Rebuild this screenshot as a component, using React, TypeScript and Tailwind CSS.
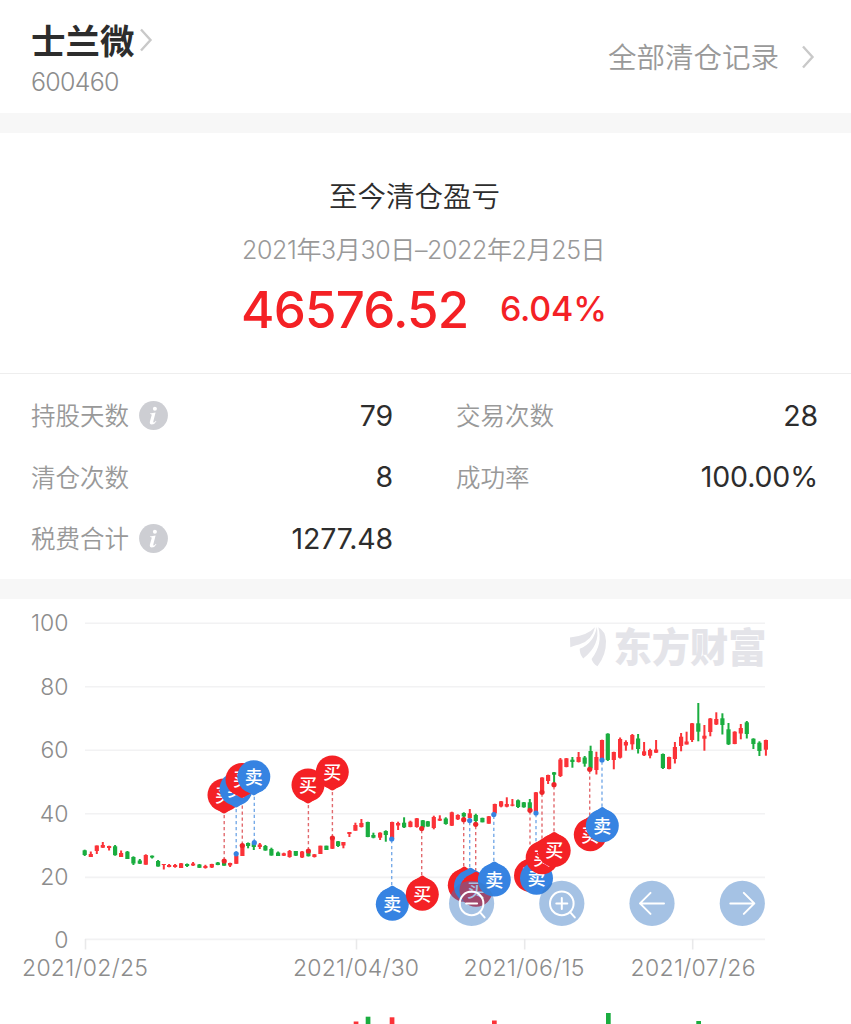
import React from "react";

type Candle = [x: number, color: "r" | "g", high: number, low: number, bodyTop: number, bodyBottom: number];

const RED = "#fb3238";
const GREEN = "#1aad3f";

const candles: Candle[] = [
  [84.6, "g", 849.7, 856, 850.3, 855],
  [90.7, "r", 851.5, 857, 854, 857],
  [96.7, "r", 845.5, 854, 845.5, 851],
  [102.7, "r", 842, 848, 845, 847.7],
  [109, "r", 845.7, 850.5, 846, 848],
  [115, "g", 845, 855.7, 846.3, 855.2],
  [121, "r", 850.5, 857, 853, 857],
  [127.3, "g", 851, 859, 851.7, 859],
  [133.3, "g", 856.3, 865, 857, 863.5],
  [139.7, "g", 859, 864, 860.5, 863.7],
  [145.7, "r", 854.3, 864.7, 855, 864.7],
  [152, "g", 855.5, 858.5, 855.7, 857.5],
  [158, "g", 860, 866.7, 861, 866.5],
  [163.7, "r", 864, 869.5, 864, 865],
  [169, "r", 864, 867.3, 865, 867],
  [175, "r", 864, 867.7, 865, 867],
  [181, "r", 863, 868, 863.3, 868],
  [187, "g", 863.5, 867, 864, 866],
  [193, "r", 862, 866, 863.5, 865.5],
  [199.3, "g", 864, 868, 864.5, 867.8],
  [205.3, "r", 864.8, 868.6, 866, 868],
  [211.7, "r", 863.8, 868, 864, 867.5],
  [217.7, "g", 862, 865.2, 862.5, 865],
  [224, "g", 862.5, 865.7, 862.5, 865.7],
  [230, "r", 862.7, 867, 863, 865.5],
  [236.2, "r", 854.7, 863.8, 855.7, 863.8],
  [242.3, "r", 845.5, 856, 845.5, 856],
  [248, "g", 842.5, 848.3, 843, 846],
  [253.7, "g", 843, 850, 843.5, 847],
  [259.7, "r", 843, 849, 844.5, 847],
  [265.3, "g", 845, 850.7, 846, 850.5],
  [271.3, "g", 847.7, 855.7, 849, 855.5],
  [278, "g", 851.5, 856, 852.5, 856],
  [283.7, "r", 852.7, 856, 853.3, 855.7],
  [289.5, "r", 850, 857.7, 851, 857],
  [295.7, "g", 851, 856, 851, 855.7],
  [302, "r", 851, 858, 851.5, 857.5],
  [308.3, "g", 851.5, 856.5, 852, 856.2],
  [314.3, "r", 854, 857.5, 854.3, 857],
  [320.3, "r", 845.7, 854, 845.7, 854],
  [326.3, "g", 845.7, 850, 845.7, 850],
  [332.3, "r", 838.5, 849, 839.5, 848.7],
  [338, "g", 841, 847, 841.3, 846],
  [343.3, "r", 842, 848.3, 842, 845.5],
  [349.3, "r", 832, 837, 832, 834],
  [355.3, "r", 822.7, 830.7, 825, 830.7],
  [361.3, "r", 819, 827.5, 823, 827],
  [367.7, "g", 821.7, 837.2, 822, 837],
  [373.3, "g", 832.7, 838.3, 835, 837.7],
  [380, "r", 832.3, 840, 832.7, 837.7],
  [385.7, "g", 830.3, 841.7, 831, 835],
  [392, "r", 821.7, 839, 822, 839],
  [398, "r", 821.7, 830, 823, 825.5],
  [404, "g", 817.3, 828, 822.7, 827.3],
  [410.3, "r", 820.7, 827.3, 821.7, 827],
  [416.7, "r", 818, 827.7, 818.3, 827],
  [422.7, "g", 820, 827.7, 820.3, 827.5],
  [427.7, "g", 821, 826.7, 821.3, 826.5],
  [433.7, "r", 815.7, 829.3, 817, 828],
  [439.7, "r", 815.3, 821, 818.7, 820.7],
  [445.7, "g", 817.3, 824.7, 818.5, 824],
  [451.7, "r", 811.7, 826, 812.3, 825.7],
  [457.7, "r", 814.3, 820, 815, 819.3],
  [463.7, "g", 812.3, 818, 813, 816.5],
  [469.7, "r", 809, 818.3, 813.3, 818],
  [475.7, "g", 813.7, 822, 815, 821],
  [482.3, "g", 817.7, 822.3, 817.9, 822.3],
  [488.7, "r", 816, 823.7, 816.3, 823.7],
  [494.7, "r", 803.7, 814, 804, 813.5],
  [501, "r", 801, 807.3, 801.3, 806.5],
  [506.7, "r", 797.3, 807.3, 804, 806.7],
  [512.3, "r", 799, 806.3, 804.5, 805.7],
  [518, "g", 799.5, 808, 800.3, 807],
  [523.7, "g", 802, 807.7, 802.3, 807.3],
  [529.7, "g", 799, 809.3, 802.3, 809.3],
  [535.8, "r", 792, 813, 792.3, 812],
  [542, "r", 777.3, 792.3, 777.5, 792],
  [548, "r", 774.7, 784, 775, 781],
  [554, "g", 772, 784, 772.3, 774.7],
  [560.3, "r", 758, 777, 759.5, 776],
  [566.3, "r", 758, 767.3, 758.3, 767],
  [572.3, "g", 757, 767.7, 759.7, 762],
  [578.5, "r", 752, 762.5, 757, 762],
  [584.6, "g", 756, 766.7, 757.5, 763.7],
  [590.5, "g", 745.7, 770.7, 751, 768.5],
  [596.3, "r", 751.7, 774.5, 757, 770],
  [601.9, "r", 739.7, 761, 740, 760],
  [607.7, "g", 733.3, 761, 733.7, 760],
  [613.7, "r", 751.7, 769.3, 752, 760],
  [620, "r", 737.5, 758.5, 739, 757.7],
  [625.8, "r", 740.3, 750.7, 742, 745.5],
  [632.2, "r", 734, 749.7, 735, 744.3],
  [638, "g", 734, 753.5, 738.5, 749],
  [644, "r", 742, 756, 751.3, 755.3],
  [650, "r", 748.7, 758.3, 750, 755.7],
  [656, "r", 740, 753, 749.5, 752.7],
  [662.8, "g", 753.5, 769, 754, 768],
  [669, "r", 756.7, 769.3, 757, 769],
  [674.8, "r", 742, 763.5, 747, 759],
  [681, "r", 733, 751.3, 736.7, 746],
  [686.5, "r", 731.7, 744.5, 741.5, 744.5],
  [692, "r", 723, 742, 723.3, 740],
  [698.2, "g", 703, 741.3, 723.3, 731.7],
  [704.3, "r", 725, 750.7, 735.7, 738.7],
  [710.2, "r", 718, 736.3, 718.5, 732],
  [716.2, "r", 712.3, 725, 719, 724.5],
  [722.3, "g", 713.3, 734.5, 718.3, 725],
  [728.4, "g", 723, 745, 729.3, 744.3],
  [734.6, "r", 731.3, 744.2, 731.7, 744],
  [740.7, "r", 724, 739.3, 728, 733.5],
  [746.7, "g", 721, 738.5, 722.3, 734],
  [753.3, "g", 738.3, 749, 738.7, 744],
  [759.3, "g", 741.3, 756, 742.7, 751],
  [765.8, "r", 739.7, 755.7, 740, 749.7],
];

type Marker = { x: number; kind: "buy" | "sell"; cx: number; cy: number; dot: number };

const markers: Marker[] = [
  { x: 224.2, kind: "buy", cx: 224, cy: 795, dot: 861 },
  { x: 236.2, kind: "sell", cx: 236, cy: 789, dot: 853.8 },
  { x: 242.3, kind: "buy", cx: 242, cy: 779.5, dot: 845.5 },
  { x: 254.3, kind: "sell", cx: 253.8, cy: 776.8, dot: 842.7 },
  { x: 308.4, kind: "buy", cx: 308, cy: 785, dot: 851 },
  { x: 332.4, kind: "buy", cx: 332.3, cy: 772, dot: 838 },
  { x: 391.7, kind: "sell", cx: 392.3, cy: 904.3, dot: 839 },
  { x: 421.7, kind: "buy", cx: 422.3, cy: 894.2, dot: 828.5 },
  { x: 463.7, kind: "buy", cx: 464.3, cy: 885.2, dot: 819.7 },
  { x: 469.7, kind: "sell", cx: 470.5, cy: 886.3, dot: 820.6 },
  { x: 475.7, kind: "buy", cx: 476, cy: 890.3, dot: 824.3 },
  { x: 493.8, kind: "sell", cx: 494.3, cy: 880, dot: 814.5 },
  { x: 530, kind: "buy", cx: 530.5, cy: 875.6, dot: 810.3 },
  { x: 536, kind: "sell", cx: 536.5, cy: 878.2, dot: 813 },
  { x: 542, kind: "buy", cx: 542.2, cy: 857.7, dot: 792.3 },
  { x: 554, kind: "buy", cx: 554.2, cy: 850.5, dot: 784.7 },
  { x: 589.7, kind: "buy", cx: 590.3, cy: 834.7, dot: 769.3 },
  { x: 602, kind: "sell", cx: 602.3, cy: 825.7, dot: 760 },
];

const gridLines = [
  { label: "100", y: 623.3 },
  { label: "80", y: 686.8 },
  { label: "60", y: 750.2 },
  { label: "40", y: 813.8 },
  { label: "20", y: 877.4 },
  { label: "0", y: 939.4 },
];

const dates = [
  { label: "2021/02/25", x: 85.5, start: 22, width: 126 },
  { label: "2021/04/30", x: 356.5, start: 293, width: 126 },
  { label: "2021/06/15", x: 524.7, start: 463.5, width: 121 },
  { label: "2021/07/26", x: 692.7, start: 630.5, width: 125 },
];

const volumes = [
  { x: 353.7, y: 1021.5, color: RED },
  { x: 365.7, y: 1016.7, color: GREEN },
  { x: 389.7, y: 1017.3, color: RED },
  { x: 492, y: 1020.5, color: RED },
  { x: 606, y: 1013, color: GREEN },
  { x: 696.3, y: 1021, color: GREEN },
];

function Chevron({ className }: { className: string }) {
  return (
    <svg viewBox="0 0 14 24" className={className} fill="none" stroke="#c9c9c9" strokeWidth="2.4">
      <path d="M2 1.5 L11.5 12 L2 22.5" />
    </svg>
  );
}

function InfoIcon() {
  return (
    <svg viewBox="0 0 29 29" className="mt-[1px] ml-[10px] h-[29px] w-[29px]">
      <circle cx="14.5" cy="14.5" r="14.4" fill="#cdced3" />
      <circle cx="15.9" cy="7.8" r="2" fill="#fff" />
      <path
        d="M11 12.4 L16.6 11.4 L14.3 20.6 Q14.1 21.9 15 21.4 Q16 20.9 16.9 19.7 L17.4 20.2 Q15.6 23.5 12.8 23.6 Q10.3 23.4 10.9 20.6 L12.7 13.9 Q12.8 13.1 11 13.1 Z"
        fill="#fff"
      />
    </svg>
  );
}

function Stat({ label, value, info }: { label: string; value: string; info?: boolean }) {
  return (
    <div className="flex h-[61.5px] items-center">
      <span className="pt-[3px] text-[24.5px] font-[350] text-[#999999]">{label}</span>
      {info && <InfoIcon />}
      <span className="ml-auto pt-[2px] text-[28.5px] tracking-[-0.15px] text-[#2d2d2d]">{value}</span>
    </div>
  );
}

function Pin({ marker }: { marker: Marker }) {
  const { cx, cy, kind } = marker;
  const fill = kind === "buy" ? "#f42125" : "#3683e2";
  const down = cy < marker.dot;
  const s = down ? 1 : -1;
  const tip = `M${cx - 12} ${cy + s * 11.2} L${cx - 2} ${cy + s * 17.8} Q${cx} ${cy + s * 19.4} ${cx + 2} ${cy + s * 17.8} L${cx + 12} ${cy + s * 11.2} Z`;
  return (
    <g>
      <circle cx={cx} cy={cy} r="16.5" fill={fill} />
      <path d={tip} fill={fill} />
      <text x={cx} y={cy + 6.8} textAnchor="middle" fontSize="18" fontWeight="500" fill="#fff">
        {kind === "buy" ? "买" : "卖"}
      </text>
    </g>
  );
}

function ToolButton({ cx, children }: { cx: number; children: React.ReactNode }) {
  return (
    <g transform={`translate(${cx} 903.4)`}>
      <circle r="22.6" fill="#3877c4" fillOpacity="0.45" />
      <g fill="none" stroke="#fff" strokeWidth="2" strokeLinecap="round" strokeLinejoin="round">
        {children}
      </g>
    </g>
  );
}

function Chart() {
  return (
    <svg viewBox="0 599 851 425" className="block h-[425px] w-[851px]">
      {gridLines.map((g) => (
        <g key={g.label}>
          <line x1="85" x2="765" y1={g.y} y2={g.y} stroke="#f2f2f3" strokeWidth="1.6" />
          <text x="68.5" y={g.label === "0" ? 948 : g.y + 8} textAnchor="end" fontSize="23" fontWeight="300" fill="#8c8c8c">
            {g.label}
          </text>
        </g>
      ))}
      {dates.map((d) => (
        <g key={d.label}>
          <line x1={d.x} x2={d.x} y1="939" y2="949.5" stroke="#e9e9ea" strokeWidth="1.6" />
          <text x={d.start} y="976" textLength={d.width} fontSize="23" fontWeight="300" fill="#8c8c8c">
            {d.label}
          </text>
        </g>
      ))}

      <g fill="#e4e4e9">
        <path d="M570 637.5 Q587 636 595 627.3 Q592 641 579 644.5 Q572.5 646 570.3 647.3 Z" />
        <path d="M596.8 627 Q600.5 645 583.2 658.5 Q579.5 654 579.7 648.8 Q594 643 596.8 627 Z" />
        <path d="M598.3 627.3 Q605.5 631 606 641 Q606.3 655 597.5 666.3 Q593 664 591.6 659 Q603 644 598.3 627.3 Z" />
        <text x="613.5" y="661.5" fontSize="40" fontWeight="900" textLength="153" lengthAdjust="spacingAndGlyphs">
          东方财富
        </text>
      </g>

      {candles.map(([x, color, high, low, top, bottom]) => (
        <g key={x} fill={color === "r" ? RED : GREEN}>
          <rect x={x - 0.9} y={high} width="2" height={low - high} />
          <rect x={x - 2} y={top} width="4.2" height={bottom - top} />
        </g>
      ))}

      {markers.map((m) => (
        <g key={m.x}>
          <line
            x1={m.x}
            x2={m.x}
            y1={m.cy < m.dot ? m.cy + 20 : m.cy - 19}
            y2={m.dot}
            stroke={m.kind === "buy" ? "#e26a6e" : "#78abe8"}
            strokeWidth="1.4"
            strokeDasharray="3.2 2.8"
          />
          <circle cx={m.x} cy={m.dot} r="2.6" fill={m.kind === "buy" ? "#ee2529" : "#3683e2"} />
        </g>
      ))}
      {markers.map((m) => (
        <Pin key={m.x} marker={m} />
      ))}

      <ToolButton cx={471.6}>
        <circle r="11.8" />
        <path d="M-5.5 0 H5.5 M8.5 9 L13 14" />
      </ToolButton>
      <ToolButton cx={561.8}>
        <circle r="11.8" />
        <path d="M-5.5 0 H5.5 M0 -5.5 V5.5 M8.5 9 L13 14" />
      </ToolButton>
      <ToolButton cx={652}>
        <path d="M12 0 H-12 M-1.5 -10.5 L-12 0 L-1.5 10.5" />
      </ToolButton>
      <ToolButton cx={742.3}>
        <path d="M-12 0 H12 M1.5 -10.5 L12 0 L1.5 10.5" />
      </ToolButton>

      {volumes.map((v) => (
        <rect key={v.x} x={v.x} y={v.y} width="4.7" height={1024 - v.y} fill={v.color} />
      ))}
    </svg>
  );
}

export default function App() {
  return (
    <main className="h-[1024px] w-[851px] overflow-hidden bg-white font-['Inter','Noto_Sans_CJK_SC',sans-serif] leading-none">
      <header className="flex h-[113px] items-center justify-between pr-[36px] pl-[31px]">
        <div className="pt-[2px]">
          <div className="flex items-center">
            <h1 className="pt-[4px] text-[34.5px] leading-[40px] font-bold text-[#2d2d2d]">士兰微</h1>
            <Chevron className="ml-[4px] h-[24px] w-[14px]" />
          </div>
          <div className="mt-[4px] text-[25px] leading-[32px] font-light tracking-[-0.75px] text-[#8c8c8c]">600460</div>
        </div>
        <div className="flex items-center text-[28.5px] font-[350] text-[#999999]">
          <span className="pt-[3px]">全部清仓记录</span>
          <Chevron className="ml-[22px] h-[24px] w-[14px]" />
        </div>
      </header>
      <div className="h-[20px] bg-[#f7f7f7]" />

      <section className="flex h-[241px] flex-col border-b border-[#eeeeee] pt-[44px] pl-[242px]">
        <h2 className="pl-[87px] text-[28.5px] leading-[40px] font-[350] text-[#2d2d2d]">至今清仓盈亏</h2>
        <p className="mt-[16px] text-[25px] leading-[34px] font-[350] tracking-[-0.38px] whitespace-nowrap text-[#999999]">
          2021年3月30日–2022年2月25日
        </p>
        <div className="mt-[12px] flex h-[60px] items-center font-medium text-[#f42125]">
          <span className="-ml-[1px] w-[259px] text-[51px] tracking-[-0.8px]">46576.52</span>
          <span className="text-[34px] tracking-[-0.2px]">6.04%</span>
        </div>
      </section>

      <section className="grid h-[205px] grid-cols-[362px_362px] content-start gap-x-[63px] pt-[10px] pl-[31px]">
        <Stat label="持股天数" value="79" info />
        <Stat label="交易次数" value="28" />
        <Stat label="清仓次数" value="8" />
        <Stat label="成功率" value="100.00%" />
        <Stat label="税费合计" value="1277.48" info />
      </section>
      <div className="h-[20px] bg-[#f7f7f7]" />

      <Chart />
    </main>
  );
}
